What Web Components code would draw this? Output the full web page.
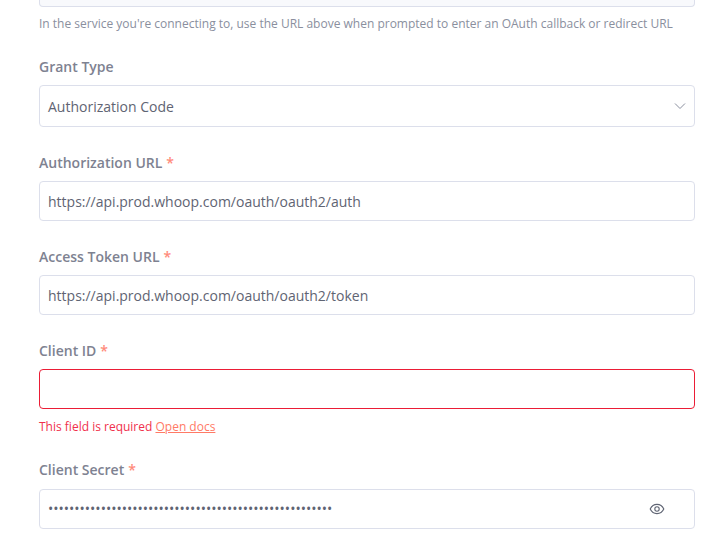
<!DOCTYPE html>
<html>
<head>
<meta charset="utf-8">
<style>
  html, body { margin: 0; height: 558px; overflow: hidden; background: #fff; }
  body { font-family: "Open Sans", sans-serif; font-size: 14px; color: #5f6473; }
  oauth-form { padding: 0 24px 0 39px; }
</style>
</head>
<body>
<oauth-form>
  <form-field-box>
    <callback-url></callback-url>
    <p-help>In the service you're connecting to, use the URL above when prompted to enter an OAuth callback or redirect URL</p-help>
  </form-field-box>
  <form-field label="Grant Type">
    <select-box value="Authorization Code"></select-box>
  </form-field>
  <form-field label="Authorization URL" required>
    <text-box value="https://api.prod.whoop.com/oauth/oauth2/auth"></text-box>
  </form-field>
  <form-field label="Access Token URL" required>
    <text-box value="https://api.prod.whoop.com/oauth/oauth2/token"></text-box>
  </form-field>
  <form-field label="Client ID" required error>
    <text-box invalid></text-box>
  </form-field>
  <form-field label="Client Secret" required secret>
    <text-box secret value="••••••••••••••••••••••••••••••••••••••••••••••••••••••"></text-box>
  </form-field>
</oauth-form>
<script>
const boxStyles = `
  .box {
    display: flex;
    align-items: center;
    box-sizing: border-box;
    height: 40px;
    padding: 2px 8px 0;
    background: #fff;
    border: 1px solid #dcdfeb;
    border-radius: 4px;
    color: #5f6473;
    font-size: 14px;
    line-height: 20px;
  }
`;

class OauthForm extends HTMLElement {
  constructor() {
    super();
    this.attachShadow({mode: 'open'});
    this.shadowRoot.innerHTML = `
      <style>
        :host { display: flex; flex-direction: column; gap: 26px; }
      </style>
      <slot></slot>
    `;
  }
}

class FormFieldBox extends HTMLElement {
  constructor() {
    super();
    this.attachShadow({mode: 'open'});
    this.shadowRoot.innerHTML = `
      <style>
        :host { display: block; margin-bottom: -1px; }
      </style>
      <slot></slot>
    `;
  }
}

class CallbackUrl extends HTMLElement {
  constructor() {
    super();
    this.attachShadow({mode: 'open'});
    this.shadowRoot.innerHTML = `
      <style>
        :host {
          display: block;
          box-sizing: border-box;
          height: 7px;
          background: #f8f9fc;
          border: 1px solid #dcdfeb;
          border-top: none;
          border-radius: 0 0 4px 4px;
        }
      </style>
    `;
  }
}

class PHelp extends HTMLElement {
  constructor() {
    super();
    this.attachShadow({mode: 'open'});
    this.shadowRoot.innerHTML = `
      <style>
        :host {
          display: block;
          margin-top: 9px;
          color: #8a8f9e;
          font-size: 12px;
          line-height: 16px;
          white-space: nowrap;
        }
      </style>
      <slot></slot>
    `;
  }
}

class FormField extends HTMLElement {
  constructor() {
    super();
    this.attachShadow({mode: 'open'});
    const star = this.hasAttribute('required') ? '<span class="star">*</span>' : '';
    const error = this.hasAttribute('error')
      ? '<div class="error">This field is required <a href="#">Open docs</a></div>'
      : '';
    this.shadowRoot.innerHTML = `
      <style>
        :host { display: block; }
        :host([error]) { margin-bottom: -1px; }
        label {
          display: block;
          margin-bottom: 8px;
          color: #7e8291;
          font-size: 14px;
          font-weight: 600;
          line-height: 20px;
        }
        :host([secret]) label { margin-bottom: 9px; }
        .star { color: #ff8a7a; margin-left: 4px; }
        .error {
          margin-top: 10px;
          color: #f0304c;
          font-size: 12px;
          line-height: 16px;
        }
        .error a { color: #ff7a66; }
      </style>
      <label>${this.getAttribute('label')}${star}</label>
      <slot></slot>
      ${error}
    `;
  }
}

class TextBox extends HTMLElement {
  constructor() {
    super();
    this.attachShadow({mode: 'open'});
    const value = this.getAttribute('value') || '';
    const eye = this.hasAttribute('secret') ? `
      <svg width="16" height="16" viewBox="0 0 16 16" fill="none" stroke="#5f6473" stroke-width="1.1">
        <path d="M1.200 8C2.600 5 5 3.400 8 3.400s5.400 1.600 6.800 4.600c-1.400 3-3.800 4.600-6.800 4.600S2.600 11 1.200 8z"/>
        <circle cx="8" cy="8" r="2.200"/>
      </svg>` : '';
    this.shadowRoot.innerHTML = `
      <style>
        :host { display: block; }
        ${boxStyles}
        .invalid { border-color: #eb1d36; }
        .secret { padding-top: 0; }
        .value { flex: 1; white-space: nowrap; }
        svg { margin-right: 21px; flex: none; }
      </style>
      <div class="box ${this.hasAttribute('invalid') ? 'invalid' : ''} ${this.hasAttribute('secret') ? 'secret' : ''}">
        <span class="value">${value}</span>
        ${eye}
      </div>
    `;
  }
}

class SelectBox extends HTMLElement {
  constructor() {
    super();
    this.attachShadow({mode: 'open'});
    this.shadowRoot.innerHTML = `
      <style>
        :host { display: block; }
        ${boxStyles}
        .box { height: 42px; padding-top: 1px; justify-content: space-between; }
        svg { flex: none; margin-top: -1px; }
      </style>
      <div class="box">
        <span>${this.getAttribute('value')}</span>
        <svg width="12" height="12" viewBox="0 0 12 12" fill="none" stroke="#8a8f9e" stroke-width="1">
          <path d="M1 3.500l5 5 5-5"/>
        </svg>
      </div>
    `;
  }
}

customElements.define('oauth-form', OauthForm);
customElements.define('form-field-box', FormFieldBox);
customElements.define('callback-url', CallbackUrl);
customElements.define('p-help', PHelp);
customElements.define('form-field', FormField);
customElements.define('text-box', TextBox);
customElements.define('select-box', SelectBox);
</script>
</body>
</html>
